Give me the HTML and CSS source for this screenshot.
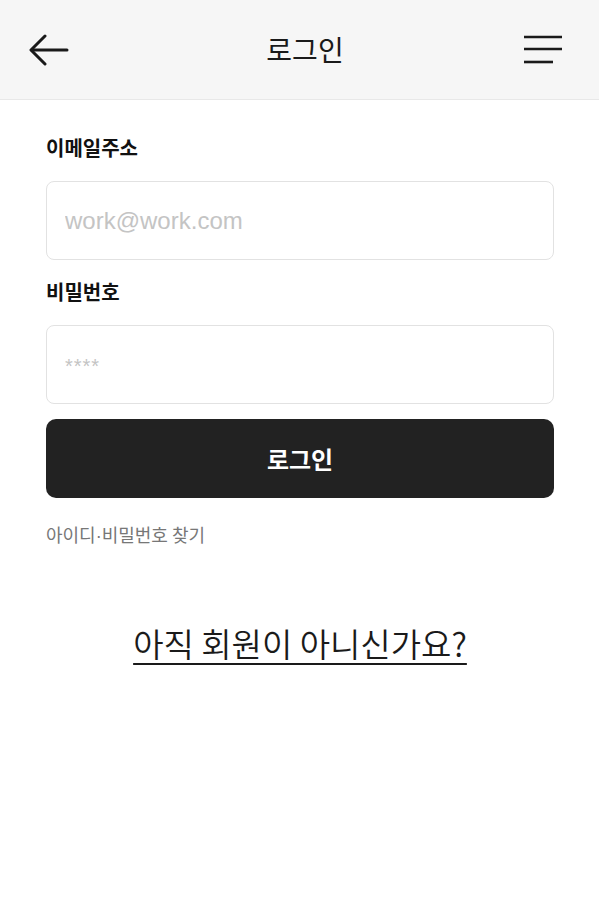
FILE: index.html
```html
<!DOCTYPE html>
<html>
<head>
  <title>로그인</title>
  <link rel="stylesheet" href="styles.css">
</head>
<body>
  <header class="topbar">
    <a href="#" class="icon-btn back-btn">
      <svg width="40" height="32" viewBox="0 0 40 32" fill="none" stroke="#1a1a1a" stroke-width="3" stroke-linecap="round" stroke-linejoin="round">
        <path d="M38 16H3"/>
        <path d="M16 2L2 16L16 30"/>
      </svg>
    </a>
    <h1 class="topbar-title">로그인</h1>
    <a href="#" class="icon-btn menu-btn">
      <svg width="40" height="30" viewBox="0 0 40 30" fill="none" stroke="#1a1a1a" stroke-width="2.6">
        <path d="M1 2H39"/>
        <path d="M1 14H39"/>
        <path d="M1 27H30"/>
      </svg>
    </a>
  </header>

  <div class="container">
    <form class="login-form">
      <label for="email">이메일주소</label>
      <input type="email" id="email" placeholder="work@work.com" />

      <label for="password">비밀번호</label>
      <input type="password" id="password" class="pw-input" placeholder="****" />

      <button type="submit">로그인</button>
    </form>
    <a href="#" class="find-link">아이디<span class="dot">·</span>비밀번호 찾기</a>

    <div class="signup">
      <a href="#">아직 회원이 아니신가요?</a>
    </div>
  </div>
</body>
</html>
```

FILE: styles.css
```css
body {
  font-family: "Noto Sans CJK KR", "Noto Sans", sans-serif;
  background-color: white;
  margin: 0;
  padding: 0;
  color: #1a1a1a;
}

.topbar {
  height: 99px;
  background-color: #f6f6f6;
  border-bottom: 1px solid #e8e8e8;
  display: flex;
  align-items: center;
  justify-content: space-between;
  padding: 0 36px 0 29px;
}

.icon-btn {
  display: flex;
  align-items: center;
}

.topbar-title {
  margin: 0 0 2px 18px;
  font-size: 28px;
  font-weight: 400;
  color: #1a1a1a;
}

.container {
  padding: 34px 45px 0 46px;
}

.login-form {
  display: flex;
  flex-direction: column;
}

label {
  font-size: 20px;
  font-weight: 700;
  line-height: 28px;
  margin-bottom: 19px;
  color: #111;
}

input {
  height: 79px;
  border: 1px solid #e2e2e2;
  border-radius: 8px;
  padding: 0 18px;
  box-sizing: border-box;
  font-family: "Liberation Sans", Arial, sans-serif;
  font-size: 24px;
  margin-bottom: 18px;
  outline: none;
}

input::placeholder {
  color: #c4c4c4;
}

.pw-input {
  margin-bottom: 15px;
}

.pw-input::placeholder {
  font-size: 20px;
  letter-spacing: 1px;
}

button {
  height: 79px;
  background-color: #222;
  color: white;
  border: none;
  border-radius: 10px;
  font-family: inherit;
  font-size: 24px;
  font-weight: 700;
  cursor: pointer;
}

.find-link {
  display: inline-block;
  margin-top: 23px;
  font-size: 18px;
  color: #777;
  text-decoration: none;
}

.dot {
  font-family: "Liberation Sans", Arial, sans-serif;
}

.signup {
  text-align: center;
  margin-top: 72px;
}

.signup a {
  font-size: 33px;
  font-weight: 350;
  color: #1a1a1a;
  text-decoration: underline;
  text-underline-offset: 6px;
  text-decoration-thickness: 2px;
}
```
